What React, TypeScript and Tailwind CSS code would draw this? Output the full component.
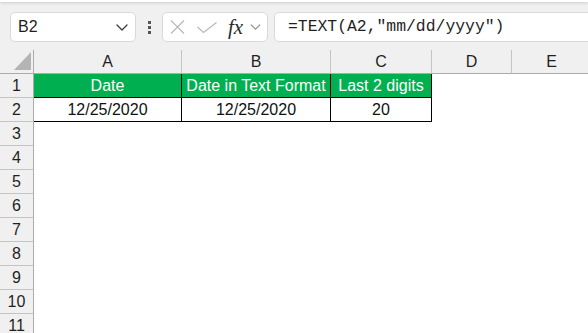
import { Fragment } from "react";

const columns = [
  { key: "A", width: "w-[148px]" },
  { key: "B", width: "w-[149px]" },
  { key: "C", width: "w-[101px]" },
  { key: "D", width: "w-[80px]" },
  { key: "E", width: "w-[80px]" },
];

const table = [
  ["Date", "Date in Text Format", "Last 2 digits"],
  ["12/25/2020", "12/25/2020", "20"],
];

const rowCount = 11;

function Chevron({ className }: { className: string }) {
  return (
    <svg className={className} viewBox="0 0 12 7" fill="none">
      <path d="M1 1l5 5 5-5" stroke="currentColor" strokeWidth="1.3" strokeLinecap="round" strokeLinejoin="round" />
    </svg>
  );
}

function FormulaBar() {
  return (
    <div className="flex h-[48px] items-start pt-[10px]">
      <div className="ml-[10px] flex h-[30px] w-[126px] shrink-0 items-center justify-between rounded-[5px] border border-[#d9d9d9] bg-white pl-[7px] pr-[7px]">
        <span className="text-[16px] leading-none text-[#1f1f1f]">B2</span>
        <Chevron className="h-[7px] w-[12px] text-[#3b3b3b]" />
      </div>

      <div className="ml-[12px] mt-[9px] flex w-[3px] shrink-0 flex-col gap-[2px]">
        <span className="h-[3px] w-[3px] bg-[#555]" />
        <span className="h-[3px] w-[3px] bg-[#555]" />
        <span className="h-[3px] w-[3px] bg-[#555]" />
      </div>

      <div className="ml-[11px] flex h-[30px] w-[106px] shrink-0 items-center rounded-[5px] border border-[#d9d9d9] bg-white pl-[7px]">
        <svg className="h-[14px] w-[15px] text-[#b9b9b9]" viewBox="0 0 15 14" fill="none">
          <path d="M1 0.5l13 13M14 0.5l-13 13" stroke="currentColor" strokeWidth="1.2" />
        </svg>
        <svg className="ml-[12px] h-[11px] w-[20px] text-[#b9b9b9]" viewBox="0 0 20 11" fill="none">
          <path d="M0.5 5l6 5.5L19.5 0.5" stroke="currentColor" strokeWidth="1.2" />
        </svg>
        <span className="ml-[11px] font-['Liberation_Serif',serif] text-[21px] italic leading-none text-[#2b2b2b]">
          fx
        </span>
        <Chevron className="ml-[7px] h-[6px] w-[11px] text-[#8a8a8a]" />
      </div>

      <div className="ml-[6px] flex h-[30px] w-[340px] shrink-0 items-center rounded-l-[5px] border border-[#d9d9d9] bg-white pl-[13px]">
        <span className="font-['Liberation_Mono',monospace] text-[16.4px] leading-none text-[#1f1f1f]">
          =TEXT(A2,"mm/dd/yyyy")
        </span>
      </div>
    </div>
  );
}

function HeaderRow() {
  return (
    <div className="flex h-[24px]">
      <div className="relative w-[34px] shrink-0 border-b border-r border-[#ababab] bg-[#f0f0f0]">
        <svg className="absolute left-0 top-0 h-[23px] w-[33px]" viewBox="0 0 33 23">
          <polygon points="14,20 31,20 31,2" fill="#b4b4b4" />
        </svg>
      </div>
      {columns.map((col) => (
        <div
          key={col.key}
          className={`${col.width} flex shrink-0 items-center justify-center border-b border-r border-b-[#ababab] border-r-[#c4c4c4] bg-[#f0f0f0] pt-[1px] text-[#1f1f1f]`}
        >
          {col.key}
        </div>
      ))}
      <div className="flex-1 border-b border-[#ababab] bg-[#f0f0f0]" />
    </div>
  );
}

function BodyRow({ index }: { index: number }) {
  const data = table[index - 1];
  const isHead = index === 1;
  return (
    <div className="flex h-[24px]">
      <div className="flex w-[34px] shrink-0 items-center justify-center border-b border-r border-b-[#c4c4c4] border-r-[#ababab] bg-[#f0f0f0] pt-[1px] text-[#1f1f1f]">
        {index}
      </div>
      {columns.map((col, i) => {
        const value = data ? data[i] : undefined;
        const inTable = data !== undefined && i < 3;
        return (
          <Fragment key={col.key}>
            <div
              className={`${col.width} flex shrink-0 items-center justify-center whitespace-nowrap border-b border-r pt-[1px] ${
                inTable ? "border-black" : "border-transparent"
              } ${isHead && inTable ? "bg-[#00b050] text-white" : "bg-white text-[#111]"}`}
            >
              {value}
            </div>
          </Fragment>
        );
      })}
      <div className="flex-1 bg-white" />
    </div>
  );
}

export default function App() {
  return (
    <div className="h-[333px] w-[588px] overflow-hidden bg-[#f0f0f0] font-['Liberation_Sans',Arial,sans-serif] text-[16px] leading-none">
      <div className="h-[2px] bg-white shadow-[0_1px_3px_rgba(0,0,0,0.18)]" />
      <FormulaBar />
      <div className="bg-white">
        <HeaderRow />
        {Array.from({ length: rowCount }, (_, i) => (
          <BodyRow key={i} index={i + 1} />
        ))}
      </div>
    </div>
  );
}
